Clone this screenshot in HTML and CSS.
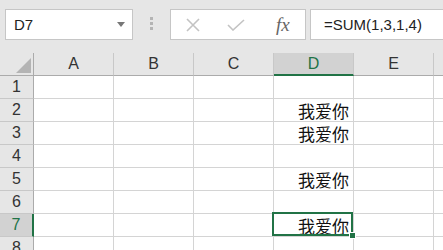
FILE: index.html
```html
<!DOCTYPE html>
<html lang="zh">
<head>
    <meta charset="UTF-8">
    <meta name="viewport" content="width=device-width, initial-scale=1.0">
    <title>Excel</title>
    <link rel="stylesheet" href="styles.css">
</head>
<body>
    <div class="barra">
        <div class="nombre">
            <span>D7</span>
            <span class="flecha"></span>
        </div>
        <div class="puntos"><i></i><i></i><i></i></div>
        <div class="botones">
            <svg class="icono" width="16" height="16" viewBox="0 0 16 16">
                <path d="M2 2 L14 14 M14 2 L2 14" stroke="#c3c3c3" stroke-width="1.6" fill="none"/>
            </svg>
            <svg class="icono" width="18" height="12" viewBox="0 0 18 12">
                <path d="M1 6 L6 11 L17 1" stroke="#c3c3c3" stroke-width="1.6" fill="none"/>
            </svg>
            <span class="fx">fx</span>
        </div>
        <div class="formula">=SUM(1,3,1,4)</div>
    </div>

    <div class="hoja">
        <div class="cab esquina"><span class="triangulo"></span></div>
        <div class="cab col">A</div>
        <div class="cab col">B</div>
        <div class="cab col">C</div>
        <div class="cab col sel-col">D</div>
        <div class="cab col">E</div>
        <div class="cab col"></div>

        <div class="cab fila">1</div>
        <div class="celda"></div><div class="celda"></div><div class="celda"></div><div class="celda"></div><div class="celda"></div><div class="celda"></div>

        <div class="cab fila">2</div>
        <div class="celda"></div><div class="celda"></div><div class="celda"></div><div class="celda">我爱你</div><div class="celda"></div><div class="celda"></div>

        <div class="cab fila">3</div>
        <div class="celda"></div><div class="celda"></div><div class="celda"></div><div class="celda">我爱你</div><div class="celda"></div><div class="celda"></div>

        <div class="cab fila">4</div>
        <div class="celda"></div><div class="celda"></div><div class="celda"></div><div class="celda"></div><div class="celda"></div><div class="celda"></div>

        <div class="cab fila">5</div>
        <div class="celda"></div><div class="celda"></div><div class="celda"></div><div class="celda">我爱你</div><div class="celda"></div><div class="celda"></div>

        <div class="cab fila">6</div>
        <div class="celda"></div><div class="celda"></div><div class="celda"></div><div class="celda"></div><div class="celda"></div><div class="celda"></div>

        <div class="cab fila sel-fila">7</div>
        <div class="celda"></div><div class="celda"></div><div class="celda"></div><div class="celda activa">我爱你</div><div class="celda"></div><div class="celda"></div>

        <div class="cab fila">8</div>
        <div class="celda"></div><div class="celda"></div><div class="celda"></div><div class="celda"></div><div class="celda"></div><div class="celda"></div>
    </div>
</body>
</html>
```

FILE: styles.css
```css
body {
    margin: 0;
    width: 443px;
    height: 250px;
    overflow: hidden;
    background: #e6e6e6;
    font-family: "Liberation Sans", Arial, sans-serif;
    color: #222;
}
.barra {
    display: flex;
    align-items: flex-start;
    height: 53px;
    padding: 9px 0 0 5px;
    box-sizing: border-box;
    overflow: hidden;
}
.barra > * {
    flex-shrink: 0;
}
.nombre {
    width: 128px;
    height: 31px;
    box-sizing: border-box;
    border: 1px solid #c6c6c6;
    background: #fff;
    display: flex;
    align-items: center;
    justify-content: space-between;
    padding: 0 7px 0 8px;
    font-size: 15px;
}
.flecha {
    width: 0;
    height: 0;
    border-left: 4px solid transparent;
    border-right: 4px solid transparent;
    border-top: 5px solid #777;
}
.puntos {
    display: flex;
    flex-direction: column;
    gap: 2px;
    margin: 8px 0 0 17px;
}
.puntos i {
    display: block;
    width: 3px;
    height: 3px;
    background: #b4b4b4;
}
.botones {
    width: 136px;
    height: 31px;
    box-sizing: border-box;
    margin-left: 17px;
    border: 1px solid #c6c6c6;
    background: #fff;
    display: flex;
    align-items: center;
    padding-left: 14px;
}
.icono {
    margin-right: 26px;
}
.fx {
    font-family: "Liberation Serif", "Times New Roman", serif;
    font-style: italic;
    font-size: 19px;
    color: #666;
    margin-left: 5px;
}
.formula {
    width: 200px;
    height: 31px;
    box-sizing: border-box;
    margin-left: 4px;
    border: 1px solid #c6c6c6;
    background: #fff;
    padding-left: 13px;
    line-height: 29px;
    font-size: 15px;
}
.hoja {
    display: grid;
    grid-template-columns: 34px repeat(6, 80px);
    grid-auto-rows: 23px;
    background: #fff;
}
.cab {
    background: #e6e6e6;
    box-sizing: border-box;
    font-size: 16px;
    color: #333;
    text-align: center;
    line-height: 22px;
}
.col {
    border-right: 1px solid #c8c8c8;
    border-bottom: 1px solid #ababab;
}
.fila {
    border-right: 1px solid #ababab;
    border-bottom: 1px solid #c8c8c8;
}
.esquina {
    position: relative;
    border-right: 1px solid #ababab;
    border-bottom: 1px solid #ababab;
}
.triangulo {
    position: absolute;
    right: 2px;
    bottom: 2px;
    width: 0;
    height: 0;
    border-left: 15px solid transparent;
    border-bottom: 15px solid #b4b4b4;
}
.sel-col {
    background: #d2d2d2;
    color: #217346;
    border-bottom: 2px solid #217346;
}
.sel-fila {
    background: #d2d2d2;
    color: #217346;
    border-right: 2px solid #217346;
}
.celda {
    box-sizing: border-box;
    border-right: 1px solid #d4d4d4;
    border-bottom: 1px solid #d4d4d4;
    text-align: right;
    padding: 1px 4px 0 0;
    font-family: "Noto Sans CJK SC", sans-serif;
    font-size: 17px;
    line-height: 21px;
    color: #111;
}
.activa {
    position: relative;
}
.activa::before {
    content: "";
    position: absolute;
    left: -2px;
    top: -2px;
    right: 0;
    bottom: 0;
    border: 2px solid #217346;
}
.activa::after {
    content: "";
    position: absolute;
    right: -3px;
    bottom: -3px;
    width: 5px;
    height: 5px;
    background: #217346;
    border: 1px solid #fff;
}
```
